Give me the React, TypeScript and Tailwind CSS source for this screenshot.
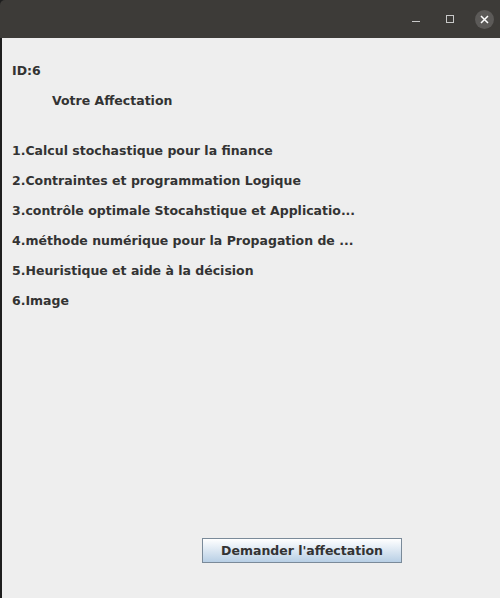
import React from "react";

export default function App() {
  const items = [
    "1.Calcul stochastique pour la finance",
    "2.Contraintes et programmation Logique",
    "3.contrôle optimale Stocahstique et Applicatio...",
    "4.méthode numérique pour la Propagation de ...",
    "5.Heuristique et aide à la décision",
    "6.Image",
  ];
  return (
    <div className="w-[500px] h-[598px] flex flex-col overflow-hidden bg-[#1e1e1e]" style={{ fontFamily: '"DejaVu Sans", sans-serif' }}>
      <div className="h-[38px] shrink-0 bg-[#3d3b38] rounded-tl-[5px] flex items-center justify-end pr-[6px]">
        <div className="w-[24px] h-[24px] flex items-center justify-center mr-[10px]">
          <div className="w-[8px] h-[1px] bg-[#c8c8c8] mt-[4px]" />
        </div>
        <div className="w-[24px] h-[24px] flex items-center justify-center mr-[13px]">
          <div className="w-[8px] h-[8px] border border-[#c8c8c8]" />
        </div>
        <div className="w-[19px] h-[19px] rounded-full bg-[#5c5a58] flex items-center justify-center">
          <svg width="9" height="9" viewBox="0 0 9 9">
            <path d="M1 1L8 8M8 1L1 8" stroke="#ffffff" strokeWidth="1.5" />
          </svg>
        </div>
      </div>
      <div className="flex-1 ml-[2px] bg-[#eeeeee] flex flex-col text-[12.5px] font-bold text-[#333333] relative">
        <div className="pt-[25px] pl-[10px] h-[15px] leading-[15px] box-content">ID:6</div>
        <div className="mt-[15px] pl-[50px] h-[15px] leading-[15px]">Votre Affectation</div>
        <div className="mt-[35px] flex flex-col gap-[15px] pl-[10px]">
          {items.map((t) => (
            <div key={t} className="h-[15px] leading-[15px] whitespace-nowrap">{t}</div>
          ))}
        </div>
        <div className="flex-1" />
        <div className="flex pl-[200px] mb-[35px]">
          <button className="w-[200px] h-[25px] border border-[#7a8a99] bg-gradient-to-b from-[#ffffff] to-[#b8cfe5] text-[12.5px] font-bold text-[#333333] flex items-center justify-center pt-[1px]" style={{ fontFamily: '"DejaVu Sans", sans-serif' }}>
            Demander l'affectation
          </button>
        </div>
      </div>
    </div>
  );
}
